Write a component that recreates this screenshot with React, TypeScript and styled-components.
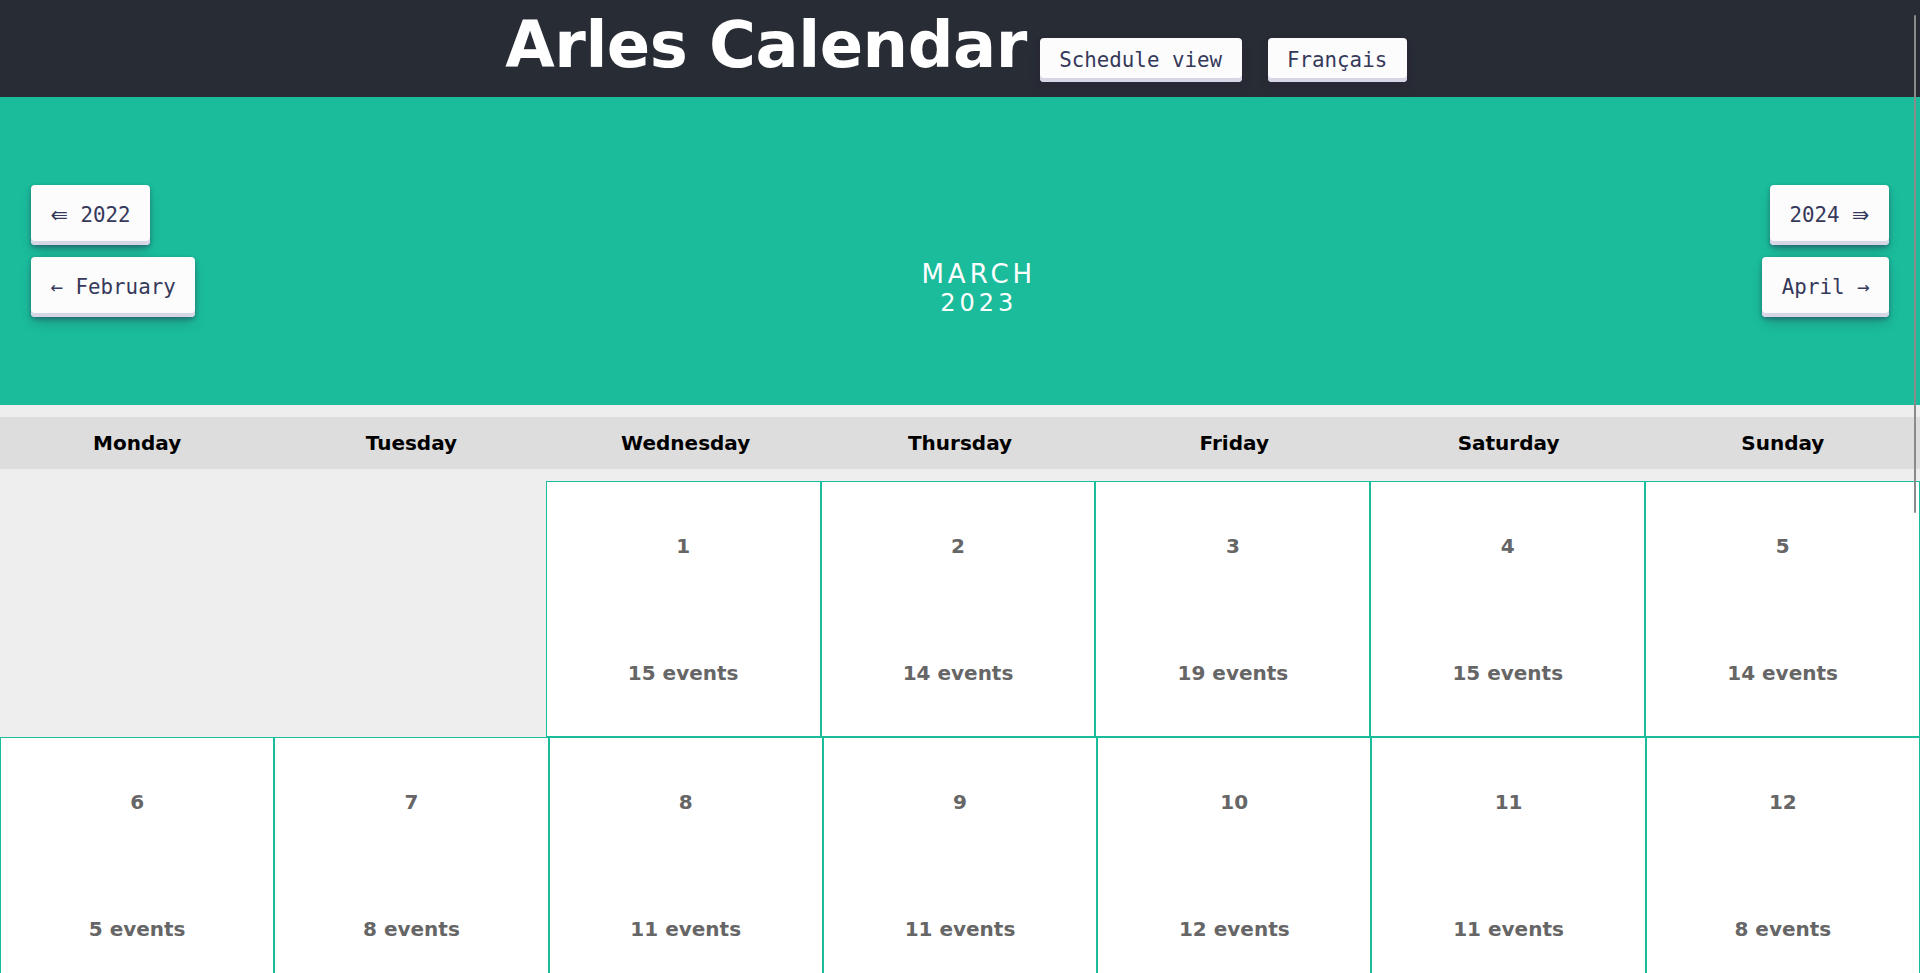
import React from "react";
import styled, { createGlobalStyle } from "styled-components";

const GlobalStyle = createGlobalStyle`
  html, body {
    margin: 0;
    padding: 0;
    background: #eeeeee;
    font-family: "DejaVu Sans", Verdana, sans-serif;
    scrollbar-width: none;
  }
  html::-webkit-scrollbar, body::-webkit-scrollbar {
    width: 0;
    height: 0;
    display: none;
  }
  * { box-sizing: border-box; }
`;

const Header = styled.header`
  background: #282c34;
  height: 97px;
  padding: 8px 0 0 5px;
  display: flex;
  justify-content: center;
  align-items: baseline;
`;

const Title = styled.h1`
  margin: 0;
  font-family: "DejaVu Sans", Verdana, sans-serif;
  font-weight: bold;
  font-size: 64px;
  line-height: normal;
  color: #ffffff;
  letter-spacing: -0.5px;
`;

const Button = styled.button<{ $tall?: boolean }>`
  appearance: none;
  border: 0;
  border-radius: 4px;
  background: #fcfcfd;
  color: #36395a;
  font-family: "DejaVu Sans Mono", monospace;
  font-size: 20.8px;
  line-height: normal;
  height: ${(p) => (p.$tall ? 60 : 44)}px;
  padding: 0 19.5px;
  display: inline-flex;
  align-items: center;
  justify-content: center;
  white-space: pre;
  cursor: pointer;
  box-shadow: rgba(45, 35, 66, 0.4) 0 2px 4px,
    rgba(45, 35, 66, 0.3) 0 7px 13px -3px, #d6d6e7 0 -4px 0 inset;
`;

const Arrow = styled.span`
  font-family: "DejaVu Sans", sans-serif;
`;

const HeaderButton = styled(Button)`
  margin: 0 13px;
`;

const MonthNav = styled.section`
  background: #1abc9c;
  height: 308px;
  padding: 0 31px 88px;
  display: flex;
  align-items: flex-end;
`;

const NavColumn = styled.div<{ $side: "start" | "end" }>`
  display: flex;
  flex-direction: column;
  gap: 12px;
  align-items: ${(p) => (p.$side === "start" ? "flex-start" : "flex-end")};
`;

const MonthTitle = styled.div`
  flex: 1;
  text-align: center;
  color: #ffffff;
  font-family: "DejaVu Sans", Verdana, sans-serif;
  font-weight: normal;
`;

const MonthName = styled.div<{ $size: number }>`
  font-size: ${(p) => p.$size}px;
  letter-spacing: 4px;
  line-height: normal;
  text-transform: uppercase;
`;

const WeekdayBar = styled.div`
  margin-top: 12px;
  height: 52px;
  background: #dddddd;
  display: grid;
  grid-template-columns: repeat(7, 1fr);
  align-items: center;
`;

const Weekday = styled.div`
  text-align: center;
  font-weight: bold;
  font-size: 20px;
  color: #000000;
`;

const Weeks = styled.div`
  margin-top: 12px;
`;

const WeekRow = styled.div`
  display: flex;
`;

const DayCell = styled.div`
  box-sizing: content-box;
  flex: 1 1 0;
  min-width: 0;
  height: 254px;
  border: 1px solid #1abc9c;
  background: #ffffff;
  display: flex;
  flex-direction: column;
  justify-content: space-around;
  align-items: center;
  font-weight: bold;
  font-size: 20px;
  color: #666666;
`;

const EmptyCell = styled.div`
  flex: 1 1 0;
  min-width: 0;
`;

const ScrollThumb = styled.div`
  position: fixed;
  top: 15px;
  right: 4px;
  width: 2px;
  height: 498px;
  background: #8a8a8a;
  border-radius: 1px;
  z-index: 10;
`;

const weekdays = [
  "Monday",
  "Tuesday",
  "Wednesday",
  "Thursday",
  "Friday",
  "Saturday",
  "Sunday",
];

const counts: Record<number, number> = {
  1: 15, 2: 14, 3: 19, 4: 15, 5: 14, 6: 5, 7: 8, 8: 11, 9: 11, 10: 12,
  11: 11, 12: 8, 13: 6, 14: 9, 15: 13, 16: 12, 17: 17, 18: 16, 19: 10,
  20: 5, 21: 9, 22: 12, 23: 11, 24: 15, 25: 14, 26: 9, 27: 6, 28: 8,
  29: 10, 30: 12, 31: 16,
};

const buildWeeks = (): (number | null)[][] => {
  const cells: (number | null)[] = [null, null];
  for (let d = 1; d <= 31; d++) cells.push(d);
  const weeks: (number | null)[][] = [];
  for (let i = 0; i < cells.length; i += 7) {
    weeks.push(cells.slice(i, i + 7));
  }
  return weeks;
};

export default function App() {
  const weeks = buildWeeks();
  return (
    <>
      <GlobalStyle />
      <Header>
        <Title>Arles Calendar</Title>
        <HeaderButton>Schedule view</HeaderButton>
        <HeaderButton>Français</HeaderButton>
      </Header>
      <MonthNav>
        <NavColumn $side="start">
          <Button $tall>
            <Arrow>⇚</Arrow> 2022
          </Button>
          <Button $tall>← February</Button>
        </NavColumn>
        <MonthTitle>
          <MonthName $size={26}>March</MonthName>
          <MonthName $size={24}>2023</MonthName>
        </MonthTitle>
        <NavColumn $side="end">
          <Button $tall>
            2024 <Arrow>⇛</Arrow>
          </Button>
          <Button $tall>April →</Button>
        </NavColumn>
      </MonthNav>
      <WeekdayBar>
        {weekdays.map((d) => (
          <Weekday key={d}>{d}</Weekday>
        ))}
      </WeekdayBar>
      <Weeks>
        {weeks.map((week, wi) => (
          <WeekRow key={wi}>
            {week.map((day, di) =>
              day === null ? (
                <EmptyCell key={`e${di}`} />
              ) : (
                <DayCell key={day}>
                  <div>{day}</div>
                  <div>{counts[day]} events</div>
                </DayCell>
              )
            )}
          </WeekRow>
        ))}
      </Weeks>
      <ScrollThumb />
    </>
  );
}
